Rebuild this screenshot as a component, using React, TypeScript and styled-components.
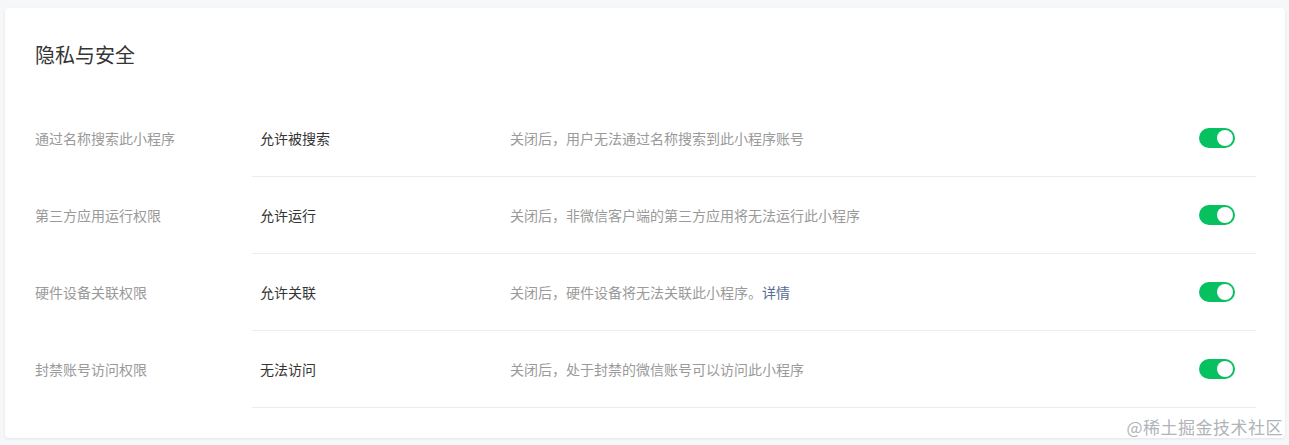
import React from "react";
import styled, { createGlobalStyle } from "styled-components";

const Global = createGlobalStyle`
  html, body { margin: 0; padding: 0; background: #f6f7f9; }
  body { font-family: "Noto Sans CJK SC", "Noto Sans", sans-serif; }
`;

const Page = styled.div`
  position: relative;
  padding: 8px 4px 7px 5px;
  height: 445px;
  box-sizing: border-box;
`;

const Card = styled.section`
  background: #fff;
  border-radius: 4px;
  box-shadow: 0 1px 3px rgba(0, 0, 0, 0.08);
  padding: 33px 29px 31px 30px;
  box-sizing: border-box;
  height: 430px;
`;

const Title = styled.h2`
  margin: 0 0 31px;
  font-size: 20px;
  line-height: 28px;
  font-weight: 400;
  color: #353535;
`;

const Row = styled.div`
  display: grid;
  grid-template-columns: 217px 1fr;
  height: 77px;
`;

const Label = styled.div`
  display: flex;
  align-items: center;
  font-size: 14px;
  color: #9a9a9a;
  padding-bottom: 2px;
`;

const Content = styled.div`
  display: grid;
  grid-template-columns: 250px 1fr auto;
  align-items: center;
  padding-left: 8px;
  padding-right: 21px;
  padding-bottom: 1px;
  border-bottom: 1px solid #ececec;
`;

const Value = styled.div`
  font-size: 14px;
  color: #353535;
`;

const Desc = styled.div`
  font-size: 14px;
  color: #9a9a9a;
`;

const Link = styled.a`
  color: #576b95;
  text-decoration: none;
`;

const Switch = styled.span`
  display: inline-flex;
  align-items: center;
  justify-content: flex-end;
  width: 36px;
  height: 20px;
  border-radius: 10px;
  background: #07c160;
  padding: 2px;
  box-sizing: border-box;
`;

const Knob = styled.span`
  width: 16px;
  height: 16px;
  border-radius: 50%;
  background: #fff;
`;

const Watermark = styled.div`
  position: absolute;
  right: 6px;
  bottom: 6px;
  font-size: 17px;
  color: #b0b3b8;
  letter-spacing: 0.5px;
`;

const rows = [
  { label: "通过名称搜索此小程序", value: "允许被搜索", desc: "关闭后，用户无法通过名称搜索到此小程序账号" },
  { label: "第三方应用运行权限", value: "允许运行", desc: "关闭后，非微信客户端的第三方应用将无法运行此小程序" },
  { label: "硬件设备关联权限", value: "允许关联", desc: "关闭后，硬件设备将无法关联此小程序。", link: "详情" },
  { label: "封禁账号访问权限", value: "无法访问", desc: "关闭后，处于封禁的微信账号可以访问此小程序" },
];

export default function App() {
  return (
    <>
      <Global />
      <Page>
        <Card>
          <Title>隐私与安全</Title>
          {rows.map((r) => (
            <Row key={r.label}>
              <Label>{r.label}</Label>
              <Content>
                <Value>{r.value}</Value>
                <Desc>
                  {r.desc}
                  {r.link && <Link href="#">{r.link}</Link>}
                </Desc>
                <Switch>
                  <Knob />
                </Switch>
              </Content>
            </Row>
          ))}
        </Card>
        <Watermark>@稀土掘金技术社区</Watermark>
      </Page>
    </>
  );
}
